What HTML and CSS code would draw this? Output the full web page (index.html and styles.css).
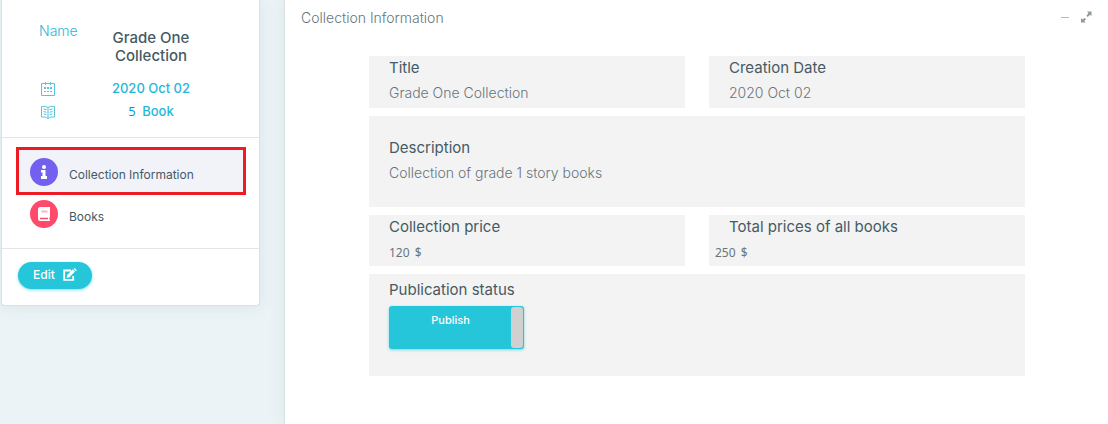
FILE: index.html
```html
<!DOCTYPE html>
<html lang="en">
<head>
<meta charset="utf-8">
<meta name="viewport" content="width=device-width, initial-scale=1">
<title>Collection Information</title>
<link rel="stylesheet" href="styles.css">
</head>
<body>
<div class="page">
  <aside class="sidebar">
    <div class="summary">
      <span class="summary-label">Name</span>
      <h1 class="summary-name">Grade One Collection</h1>
      <svg class="summary-icon" viewBox="0 0 14 14" aria-hidden="true">
        <path d="M.5 1.500h13v12H.5zM4.500 0v3M9.500 0v3" fill="none" stroke="currentColor"/>
        <path d="M3 5h2v2H3zM6 5h2v2H6zM9 5h2v2H9zM3 9h2v1H3zM6 9h2v1H6zM9 9h2v1H9z" fill="currentColor"/>
      </svg>
      <span class="summary-value">2020 Oct 02</span>
      <svg class="summary-icon" viewBox="0 0 14 14" aria-hidden="true">
        <path d="M.5 1.500Q4.500.5 7 2.500Q9.500.5 13.500 1.500V12H10L7 13.500L4 12H.5zM7 2.500V13M2.500 4L5.500 4.800M2.500 6.500L5.500 7.300M2.500 9L5.500 9.800M11.500 4L8.500 4.800M11.500 6.500L8.500 7.300M11.500 9L8.500 9.800" fill="none" stroke="currentColor"/>
      </svg>
      <span class="summary-value"><span class="count">5</span> Book</span>
    </div>
    <nav class="menu">
      <a class="menu-item active" href="#info" aria-current="page">
        <span class="dot dot-info">
          <svg width="6" height="14" viewBox="0 0 6 14" aria-hidden="true"><circle cx="3" cy="2" r="2" fill="#fff"/><path d="M0 5h4.500v6H6v3H0v-3h1.500V7.500H0z" fill="#fff"/></svg>
        </span>
        <span class="menu-text">Collection Information</span>
      </a>
      <a class="menu-item" href="#books">
        <span class="dot dot-books">
          <svg width="12" height="14" viewBox="0 0 12 14" aria-hidden="true"><path d="M2.500 0H12v10.500h-.7v2H12V14H2.500A2.500 2.500 0 0 1 0 11.500v-9A2.500 2.500 0 0 1 2.500 0z" fill="#fff"/><path d="M3.500 3.500h6v2h-6z" fill="#ffb3c0"/><path d="M2.500 10.800h7.500v1.400H2.500a.7.7 0 0 1 0-1.400z" fill="#ff4a6b"/></svg>
        </span>
        <span class="menu-text">Books</span>
      </a>
    </nav>
    <div class="actions">
      <button class="edit" type="button">Edit
        <svg width="14" height="13" viewBox="0 0 14 13" aria-hidden="true"><path d="M8 2.500H1.200v9.300h9V8" fill="none" stroke="#fff" stroke-width="1.800"/><path d="M4 7.200L9.800 1.300L12 3.600L6.200 9.400L3.700 9.800zM10.500.7Q11.300-.3 12.200.5L13.500 1.800Q14.200 2.500 12.700 3z" fill="#fff"/></svg>
      </button>
    </div>
  </aside>
  <main class="panel">
    <header class="panel-head">
      <h2 class="panel-title">Collection Information</h2>
      <div class="tools">
        <button class="tool" type="button" aria-label="Collapse"><svg width="10" height="12" viewBox="0 0 10 12"><path d="M1 6.500h8" stroke="#b4bbbf"/></svg></button>
        <button class="tool" type="button" aria-label="Expand"><svg width="12" height="12" viewBox="0 0 12 12"><path d="M7 .5h4.500V5L10 3.700L7.700 6L6.500 4.800L8.500 2zM1 7v4.500h4.500L4.200 10L6 8.200L4.800 7L2.500 8.500z" fill="currentColor"/></svg></button>
      </div>
    </header>
    <div class="cards">
      <section class="card">
        <h3 class="card-title">Title</h3>
        <p class="card-value">Grade One Collection</p>
      </section>
      <section class="card">
        <h3 class="card-title">Creation Date</h3>
        <p class="card-value">2020 Oct 02</p>
      </section>
      <section class="card wide roomy">
        <h3 class="card-title">Description</h3>
        <p class="card-value">Collection of grade 1 story books</p>
      </section>
      <section class="card amount">
        <h3 class="card-title">Collection price</h3>
        <p class="card-value price">120 <span>$</span></p>
      </section>
      <section class="card amount outdent">
        <h3 class="card-title">Total prices of all books</h3>
        <p class="card-value price">250 <span>$</span></p>
      </section>
      <section class="card wide status">
        <h3 class="card-title" id="status-title">Publication status</h3>
        <label class="toggle">
          <input class="toggle-input" type="checkbox" checked aria-describedby="status-title">
          <span class="toggle-text">Publish</span>
          <span class="toggle-handle"></span>
        </label>
      </section>
    </div>
  </main>
</div>
</body>
</html>
```
FILE: styles.css
```css
* { box-sizing: border-box; }

body {
  margin: 0;
  background: #ebf3f6;
  color: #455a64;
  font-family: Inter, "Open Sans", sans-serif;
  font-size: 14px;
}

h1, h2, h3, p { margin: 0; }
button { font: inherit; border: 0; cursor: pointer; }
svg { display: block; }

.page {
  display: grid;
  grid-template-columns: 259px minmax(0, 1fr);
  gap: 24px;
  align-items: start;
  min-height: 100vh;
  padding-left: 1px;
}

.sidebar, .panel {
  background: #fff;
  border: 1px solid #d8e1e4;
  border-top: 0;
  box-shadow: 0 1px 15px 1px rgba(69, 90, 100, 0.08);
}

.sidebar { border-radius: 0 0 4px 4px; }

.summary {
  display: grid;
  grid-template-columns: 38px 112px;
  column-gap: 18px;
  align-items: center;
  padding: 20px 36px 14px 37px;
  color: #26b8da;
}

.summary-label {
  align-self: start;
  line-height: 22px;
  font-weight: 300;
}

.summary-name {
  margin: 9px 0 12px;
  color: #455a64;
  font-size: 15px;
  font-weight: 500;
  line-height: 18px;
  text-align: center;
}

.summary-icon {
  width: 14px;
  height: 14px;
  margin-left: 2px;
  color: #59c5dd;
}

.summary-value {
  font-size: 13px;
  font-weight: 500;
  line-height: 23px;
  text-align: center;
}

.count {
  margin-right: 3px;
  color: #039be5;
  font-family: "Noto Sans", sans-serif;
  font-weight: 400;
}

.menu {
  padding: 9px 13px 11px 14px;
  border-top: 1px solid #e1e5e7;
  border-bottom: 1px solid #e1e5e7;
}

.menu-item {
  display: flex;
  align-items: center;
  gap: 11px;
  padding: 2px 11px 6px;
  border: 3px solid transparent;
  color: #455a64;
  font-size: 12px;
  text-decoration: none;
}

.menu-item.active {
  padding: 8px 11px 6px;
  border-color: #ed1c24;
  background: #f2f3f8;
}

.menu-text { padding-top: 5px; }

.dot {
  display: grid;
  place-items: center;
  width: 28px;
  height: 28px;
  border-radius: 50%;
}

.dot-info { background: #7460ee; }
.dot-books { background: #ff4a6b; }

.actions { padding: 13px 16px 16px; }

.edit {
  display: flex;
  align-items: center;
  gap: 8px;
  height: 27px;
  padding: 0 15px 2px;
  border-radius: 14px;
  background: #26c6da;
  box-shadow: 0 1px 3px rgba(38, 198, 218, 0.6);
  color: #fff;
  font-size: 12px;
  font-weight: 500;
}

.panel {
  align-self: stretch;
  border-right: 0;
  border-bottom: 0;
}

.panel-head {
  display: flex;
  align-items: center;
  justify-content: space-between;
  height: 34px;
  padding: 0 16px;
}

.panel-title {
  color: #67757c;
  font-size: 14px;
  font-weight: 300;
}

.tools { display: flex; gap: 10px; }

.tool {
  padding: 0;
  background: none;
  color: #8d989e;
}

.cards {
  display: grid;
  grid-template-columns: repeat(2, minmax(0, 1fr));
  gap: 8px 24px;
  padding: 22px 83px 48px 84px;
}

.card {
  padding: 0 20px 2px;
  background: #f3f3f3;
}

.wide { grid-column: 1 / -1; }
.roomy { padding: 20px 20px 21px; }

.card-title {
  font-size: 15px;
  font-weight: 400;
  line-height: 24px;
}

.card-value {
  color: #67757c;
  font-weight: 300;
  line-height: 26px;
}

.price {
  font-family: "Noto Sans", sans-serif;
  font-size: 12px;
  font-weight: 400;
  line-height: 27px;
}

.price span { margin-left: 2px; }
.amount { padding-bottom: 0; }
.outdent { padding-left: 6px; }
.outdent .card-title { padding-left: 14px; }
.status { padding: 4px 20px 27px; }

.toggle {
  position: relative;
  display: flex;
  width: 135px;
  height: 43px;
  margin-top: 4px;
  padding: 1px;
  border-radius: 3px;
  background: #26c6da;
  box-shadow: 0 1px 3px rgba(38, 198, 218, 0.6);
  color: #fff;
  font-size: 11px;
  font-weight: 500;
  cursor: pointer;
}

.toggle-input {
  position: absolute;
  inset: 0;
  width: 100%;
  height: 100%;
  margin: 0;
  opacity: 0;
}

.toggle-text {
  flex: 1;
  line-height: 27px;
  text-align: center;
}

.toggle-handle {
  width: 12px;
  border-radius: 3px;
  background: #d0d0d0;
}
```
